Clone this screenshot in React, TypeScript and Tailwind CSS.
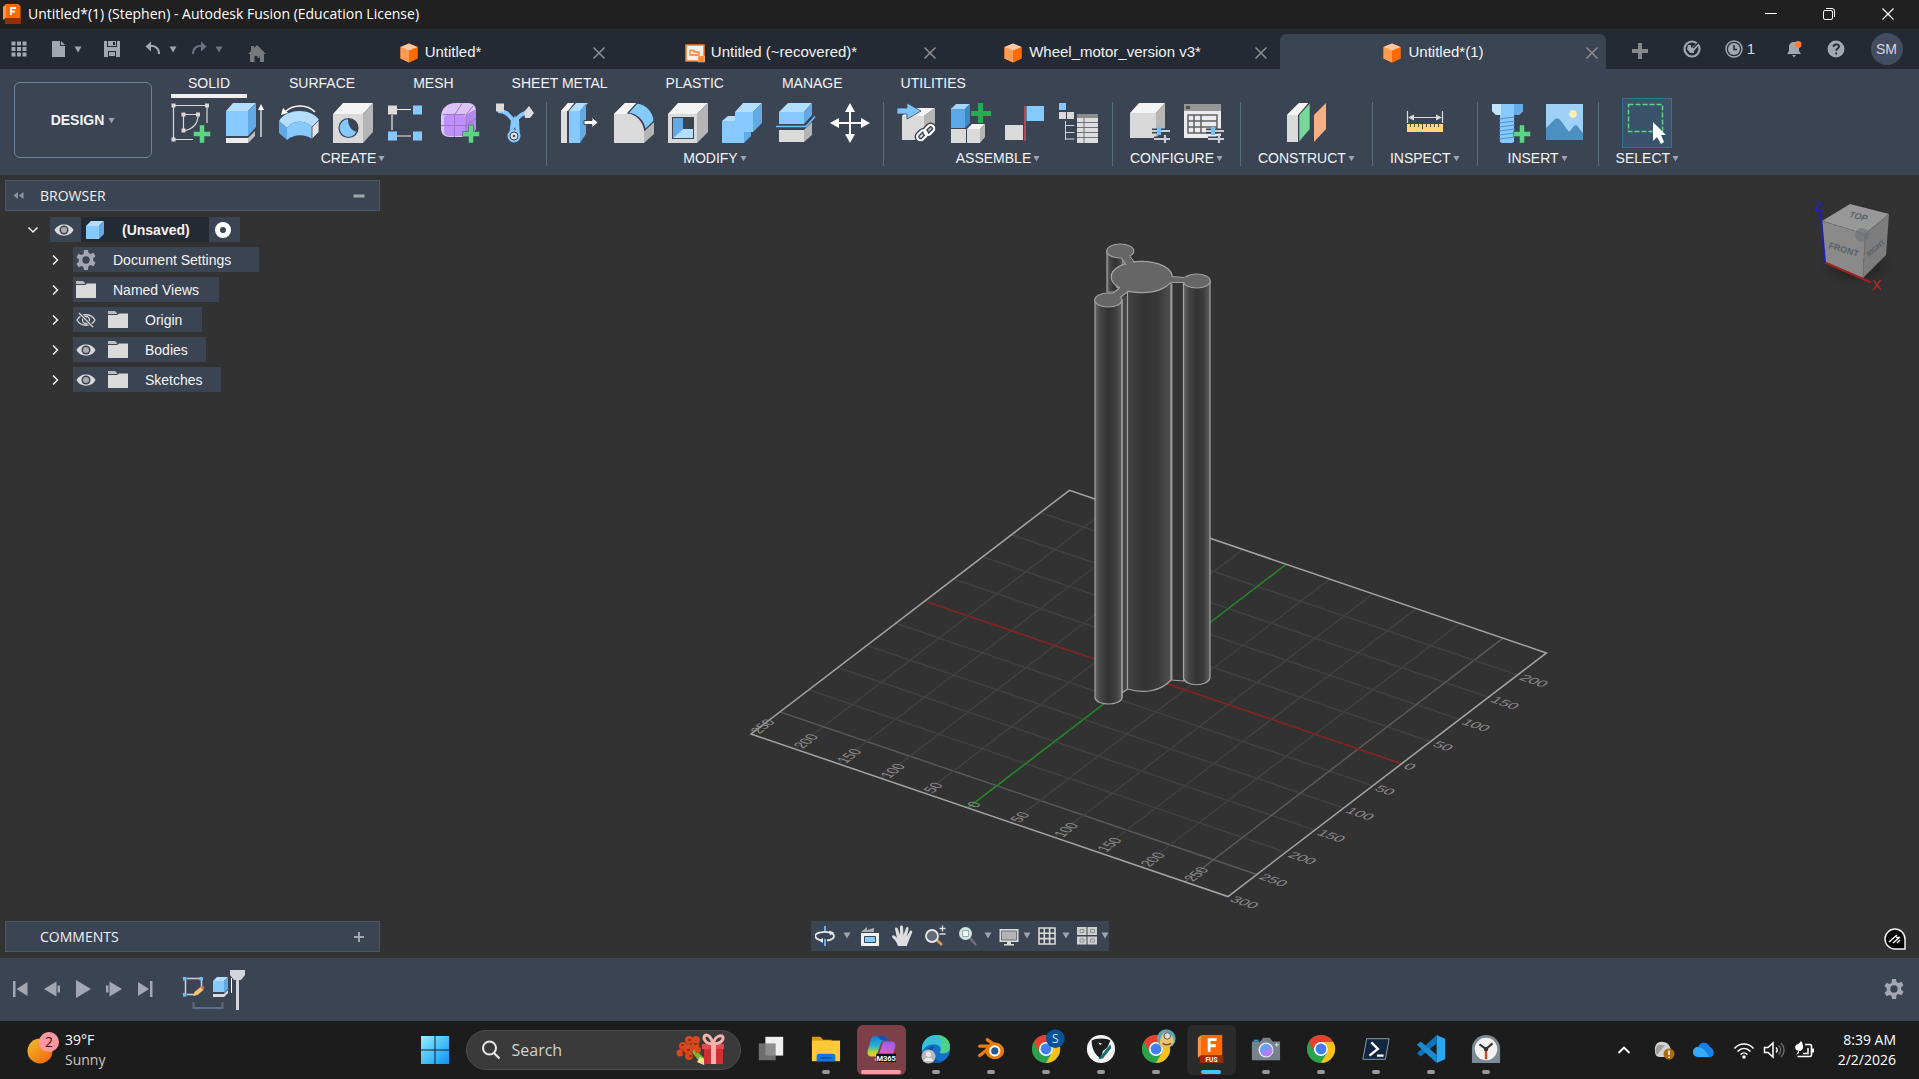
import { clsx } from 'clsx';
import type { PropsWithChildren, ReactNode } from 'react';

type IconProps = PropsWithChildren<{
  size?: number;
  box?: number;
  className?: string;
}>;

function Icon({ size = 40, box, className, children }: IconProps) {
  const b = box ?? size;
  return (
    <svg width={size} height={size} viewBox={`0 0 ${b} ${b}`} className={clsx('shrink-0', className)} fill="none" aria-hidden="true">
      {children}
    </svg>
  );
}

function Caret({ width = 8, className }: { width?: number; className?: string }) {
  return (
    <svg width={width} height="7" viewBox="0 0 8 7" className={clsx('shrink-0', className ?? 'text-[#9ea3b0]')} aria-hidden="true">
      <path d="M0.5 0.5h7L4 6.5z" fill="currentColor" />
    </svg>
  );
}

function GreenPlus({ x, y, color = '#5bd783' }: { x: number; y: number; color?: string }) {
  return <path d={`M${x - 2.5} ${y - 9}h5v6.500h6v5h-6v6.500h-5v-6.500h-6v-5h6z`} fill={color} stroke="#3b4453" strokeWidth="0.5" />;
}

function OrangeCube() {
  return (
    <Icon size={20} box={20}>
      <path d="M10 0.500L18.500 4v11.500L10 19.500 1.500 15.500V4z" fill="#ff7a1a" />
      <path d="M1.500 4L10 7.500v12L1.500 15.500z" fill="#ff9a52" />
      <path d="M10 7.500L18.500 4v11.500L10 19.500z" fill="#ff6b00" />
      <path d="M10 0.500L18.500 4 10 7.500 1.500 4z" fill="#ffc9a3" />
    </Icon>
  );
}

function DrawingDoc() {
  return (
    <Icon size={20} box={20}>
      <path d="M1 2h18v16H1z" fill="#f5f1ee" stroke="#ff7a1a" strokeWidth="1.500" />
      <path d="M5 7.500h4v1.500h5V12H5z" stroke="#ff7a1a" strokeWidth="1.300" />
      <path d="M13 13h6.500v6H13z" fill="#ff8a33" stroke="#ffd2b0" strokeWidth="0.500" />
    </Icon>
  );
}

/* ---------- ribbon icons ---------- */

const createIcons: [string, ReactNode][] = [
  ['Create Sketch', (
    <>
      <path d="M2.500 4v34M4 2.500h32M2.500 36.500H22M36 4v16" stroke="#d9d9d9" strokeWidth="1.200" />
      <path d="M12.500 12v16M13 11.500h13M27 12c0 9-5 14-14 16" stroke="#d9d9d9" strokeWidth="1.200" />
      <path d="M0.500 0.500h4v4h-4zM34 0.500h4v4h-4zM0.500 34.500h4v4h-4zM10.500 9.500h4v4h-4zM25 9.500h4v4h-4zM10.500 25.500h4v4h-4z" fill="#d9d9d9" />
      <GreenPlus x={31} y={31} />
    </>
  )],
  ['Extrude', (
    <>
      <path d="M1 35l22 0 7-7v5l-7 7H1z" fill="#bdbdbd" />
      <path d="M1 35h22v5H1z" fill="#ececec" />
      <path d="M1 8h22v25H1z" fill="#86c9ff" />
      <path d="M1 8l7-8h23l-8 8z" fill="#b3deff" />
      <path d="M23 8l8-8v24l-8 9z" fill="#61aae6" />
      <path d="M36 34V5" stroke="#fff" strokeWidth="1.200" />
      <path d="M36 1l3 6h-6z" fill="#fff" />
    </>
  )],
  ['Revolve', (
    <>
      <path d="M6 9C14 1 28 1 36 9" stroke="#fff" strokeWidth="1.300" />
      <path d="M2 12l2-7 5 5z" fill="#fff" />
      <path d="M0 18C8 5 32 5 40 17l-7 7C27 17 14 17 8 25z" fill="#b3deff" />
      <path d="M0 18l8 7v12L0 30z" fill="#61aae6" />
      <path d="M8 25c6-8 19-8 25-1v12c-7-5-18-5-25 1z" fill="#86c9ff" />
      <path d="M33 24l7-7v12l-7 7z" fill="#e3e3e3" stroke="#3b4453" strokeWidth="0.800" />
    </>
  )],
  ['Hole', (
    <>
      <path d="M0 11h30v29H0z" fill="#d9d9d9" />
      <path d="M0 11L10 0h30L30 11z" fill="#f4f4f4" />
      <path d="M30 11L40 0v29L30 40z" fill="#b5b5b5" />
      <circle cx="15.500" cy="25" r="9.500" fill="#86c9ff" stroke="#3b4453" strokeWidth="1.200" />
      <path d="M15 16a9.500 9.500 0 0 1 9.500 13C19 28 15 24 15 16z" fill="#3b4453" />
    </>
  )],
  ['Pattern', (
    <>
      <path d="M10 6.500h14M5 12v15M10 33h14" stroke="#f0f0f0" strokeWidth="1.200" />
      <path d="M1 2.500h9v9H1z" fill="#dcdcdc" />
      <path d="M26 2.500h9v9h-9zM1 28.500h9v9H1zM26 28.500h9v9h-9z" fill="#86c9ff" />
    </>
  )],
  ['Create Form', (
    <>
      <path d="M0 14C0 5 7 0 14 0h13c5 0 8 3 8 8v15c0 7-6 11-12 11H9c-6 0-9-3-9-9z" fill="#dcc4fa" />
      <path d="M25 12l10-6v17c0 7-6 11-12 11z" fill="#b487ea" />
      <path d="M3 15c0-2 1-3 3-3h15c2 0 3 1 3 3v14c0 3-1 4-4 4H8c-4 0-5-3-5-6z" fill="#bd90fa" />
      <path d="M13.500 34V12L21 0.500M0 22.500h25l10-7M25 33V12l7-9M2 11.500h22" stroke="#9a76cc" />
      <GreenPlus x={30} y={31} />
    </>
  )],
  ['Derive', (
    <>
      <path d="M3 8c8 0 11 4 15 9M35 9c-8 1-12 4-14 9M18 17l-2 17M22 17l1 17" stroke="#86c9ff" strokeWidth="4" />
      <path d="M20 12l3 8-3 6-3-6z" fill="#86c9ff" />
      <circle cx="19" cy="33" r="6.500" fill="#86c9ff" />
      <circle cx="19" cy="33" r="4" fill="#e6e6e6" stroke="#3b4453" />
      <circle cx="19" cy="33" r="1.300" fill="#3b4453" />
      <path d="M1 0.500h8v8H1zM34 3l5 7-4 5h-5l-1-6z" fill="#dcdcdc" />
    </>
  )],
];

const modifyIcons: [string, ReactNode][] = [
  ['Press Pull', (
    <>
      <path d="M1 8l7-8h6L7 8v32H1z" fill="#dedede" />
      <path d="M1 8l7-8h6L8 8z" fill="#f6f6f6" />
      <path d="M9 8h11v32H9z" fill="#86c9ff" />
      <path d="M9 8l7-8h12l-8 8z" fill="#b3deff" />
      <path d="M20 8l6-8v31l-6 9z" fill="#61aae6" />
      <path d="M24 17.500h8v-3.500l6 5.500-6 5.500v-3.500h-8z" fill="#fff" stroke="#3b4453" />
    </>
  )],
  ['Fillet', (
    <>
      <path d="M0 11L11 0h12L14 10c9 2 15 9 16 17v13H0z" fill="#dadada" />
      <path d="M0 11L11 0h12L13 11z" fill="#f6f6f6" />
      <path d="M30 28l10-9v12L30 40z" fill="#b5b5b5" />
      <path d="M14 10L23 0c10 1 17 10 17 18l-9 9C30 18 23 11 14 10z" fill="#86c9ff" stroke="#3b4453" strokeWidth="1.200" />
    </>
  )],
  ['Shell', (
    <>
      <path d="M0 11h29v29H0z" fill="#d9d9d9" />
      <path d="M0 11L10 0h30L29 11z" fill="#f4f4f4" />
      <path d="M29 11L40 0v29L29 40z" fill="#b5b5b5" />
      <path d="M4 14h22v22H4z" fill="#3b4453" />
      <path d="M5 15h10v11l-10 9z" fill="#61aae6" />
      <path d="M15 15h10v10H15z" fill="#3b4453" />
      <path d="M15 26h10v9H5z" fill="#b3deff" />
    </>
  )],
  ['Combine', (
    <>
      <path d="M0 18h13V9h18v20h-9v11H0z" fill="#86c9ff" />
      <path d="M13 9l8-9h19l-9 9zM0 18l6-5h7v5z" fill="#b3deff" />
      <path d="M31 9l9-9v20l-9 9zM22 29h7v4l-7 7z" fill="#61aae6" />
    </>
  )],
  ['Offset Face', (
    <>
      <path d="M3 9L12 0h24l-8 9z" fill="#b3deff" />
      <path d="M3 9h25v12H3z" fill="#86c9ff" />
      <path d="M28 9l8-9v12l-8 9z" fill="#61aae6" />
      <path d="M0 23.500h30l9-10" stroke="#6fc0ff" strokeWidth="1.500" />
      <path d="M3 27h25v12H3z" fill="#dadada" />
      <path d="M28 27l8-8v13l-8 7z" fill="#b5b5b5" />
    </>
  )],
  ['Move', (
    <path d="M20 0l5 9h-4v10h10v-4l9 5-9 5v-4H21v10h4l-5 9-5-9h4V21H9v4l-9-5 9-5v4h10V9h-4z" fill="#fff" />
  )],
];

const assembleIcons: [string, ReactNode][] = [
  ['Insert Derive', (
    <>
      <path d="M5 13h22v24H5z" fill="#dadada" />
      <path d="M5 13l8-8h25L27 13z" fill="#f4f4f4" />
      <path d="M27 13L38 5v22l-11 10z" fill="#b5b5b5" />
      <path d="M0 5h10V0l14 8-14 8v-5H0z" fill="#7cc4ff" stroke="#3b4453" strokeWidth="0.800" />
      <g stroke="#3b4453" strokeWidth="5"><rect x="20" y="29" width="11" height="7" rx="3.500" transform="rotate(-45 25 33)" /><rect x="27" y="23" width="11" height="7" rx="3.500" transform="rotate(-45 33 27)" /></g>
      <g stroke="#fff" strokeWidth="2.200"><rect x="20" y="29" width="11" height="7" rx="3.500" transform="rotate(-45 25 33)" /><rect x="27" y="23" width="11" height="7" rx="3.500" transform="rotate(-45 33 27)" /></g>
    </>
  )],
  ['New Component', (
    <>
      <path d="M0 5h14v20H0z" fill="#5ba7e8" />
      <path d="M0 6l5-5h14l-5 5z" fill="#a4d6ff" />
      <path d="M14 6l5-5v19l-5 5z" fill="#3f86c6" />
      <path d="M0 26h15v14H0zM16 26h13v14H16z" fill="#dadada" />
      <path d="M16 26l5-5h13l-5 5z" fill="#f4f4f4" />
      <path d="M29 26l5-5v13l-5 6z" fill="#b5b5b5" />
      <path d="M27 0h5v8h8v5h-8v7h-5v-7h-7V8h7z" fill="#1fae50" />
    </>
  )],
  ['Joint', (
    <>
      <path d="M0 22h18v15H0z" fill="#dadada" />
      <path d="M20 3v35" stroke="#e0525a" strokeWidth="1.300" />
      <path d="M21.500 3H39v15H21.500z" fill="#86c9ff" />
    </>
  )],
  ['Structure Table', (
    <>
      <path d="M0 0h7v7H0z" fill="#86c9ff" />
      <path d="M0 9h7v7H0zM8 9h7v7H8z" fill="#dadada" />
      <path d="M6.500 18v19M6.500 22.500h9M6.500 29.500h9M6.500 36h9" stroke="#d0d0d0" />
      <path d="M18 11h21v29H18z" fill="#dedede" />
      <path d="M18 11h21v4H18z" fill="#8c8c8c" />
      <path d="M18 19.500h21M18 24.500h21M18 29.500h21M18 34.500h21M25 15v25" stroke="#6c7078" />
    </>
  )],
];

const sliders = (
  <>
    <path d="M22 28h18M24 36h16M35 33v6" stroke="#3b4453" strokeWidth="5" />
    <path d="M22 28h18M24 36h16M35 32v8" stroke="#c9ced4" strokeWidth="2.200" />
    <path d="M27 24h4v8h-4z" fill="#6fc0ff" />
  </>
);

const configureIcons: [string, ReactNode][] = [
  ['Configure Design', (
    <>
      <path d="M0 10h26v25H0z" fill="#d9d9d9" />
      <path d="M0 10L9 0h26l-9 10z" fill="#f4f4f4" />
      <path d="M26 10l9-10v25l-9 10z" fill="#b5b5b5" />
      {sliders}
    </>
  )],
  ['Configuration Table', (
    <>
      <path d="M0 1h37v34H0z" fill="#ececec" />
      <path d="M0 1h37v7H0z" fill="#969696" />
      <path d="M2 3h4v3H2z" fill="#4b4f57" />
      <path d="M4 12h29v18H4zM4 18h29M4 24h29M10 12v18M17 12v18" stroke="#5d6066" strokeWidth="1.500" />
      {sliders}
    </>
  )],
];

const constructIcons: [string, ReactNode][] = [
  ['Offset Plane', (
    <>
      <path d="M1 12L13 0h9L12 12v27H1z" fill="#dadada" />
      <path d="M1 12L13 0h9L12 12z" fill="#f6f6f6" />
      <path d="M13 12L24 0v26L13 39z" fill="#79d69b" stroke="#3b4453" strokeWidth="0.600" />
      <path d="M28 12L40 0v26L28 39z" fill="#f6b083" />
    </>
  )],
];

const inspectIcons: [string, ReactNode][] = [
  ['Measure', (
    <>
      <path d="M2.500 8v12M37.500 8v12M5 14.500h30" stroke="#d9d9d9" strokeWidth="1.200" />
      <path d="M3 14.500l6-3v6zM37 14.500l-6-3v6z" fill="#d9d9d9" />
      <path d="M2 21h36v8H2z" fill="#ffd77a" />
      <path d="M5.500 21v3M9.500 21v3M13.500 21v3M17.500 21v5M21.500 21v3M25.500 21v3M29.500 21v3M33.500 21v3" stroke="#5d5540" />
    </>
  )],
];

const insertIcons: [string, ReactNode][] = [
  ['Insert Fastener', (
    <>
      <path d="M1 1h31v7l-4 4H5L1 8z" fill="#86c9ff" />
      <path d="M1 1h9v11H5L1 8z" fill="#c0e3ff" />
      <path d="M23 1h9v7l-4 4h-5z" fill="#63ace8" />
      <path d="M9 12h14v27l-2 1H11l-2-1z" fill="#86c9ff" />
      <path d="M8 16l16-2M8 20l16-2M8 24l16-2M8 28l16-2M8 32l16-2M8 36l16-2" stroke="#4c94d2" strokeWidth="1.200" />
      <GreenPlus x={31} y={31} />
    </>
  )],
  ['Canvas', (
    <>
      <path d="M1 1h37v36H1z" fill="#9fd0f7" />
      <circle cx="28" cy="11" r="3.800" fill="#ffeeb0" />
      <path d="M1 25l9-9c2-1 4-1 6 2l8 11 5-6c2-1 3-1 4 1l5 6v7H1z" fill="#4c8fc0" />
    </>
  )],
];

const groups: { name: string; icons: [string, ReactNode][]; edge?: string }[] = [
  { name: 'CREATE', icons: createIcons, edge: 'pr-1' },
  { name: 'MODIFY', icons: modifyIcons },
  { name: 'ASSEMBLE', icons: assembleIcons },
  { name: 'CONFIGURE', icons: configureIcons },
  { name: 'CONSTRUCT', icons: constructIcons },
  { name: 'INSPECT', icons: inspectIcons },
  { name: 'INSERT', icons: insertIcons },
];

function TitleBar() {
  return (
    <header className="flex h-[29px] items-center bg-[#202020] pb-px pl-[3px] font-['Open_Sans','Noto_Sans',sans-serif] text-sm text-white">
      <Icon size={20} box={20}>
        <path d="M3 0h12l2.500 2v12H2z" fill="#ff6a00" />
        <path d="M3 0v14l-3 2V3z" fill="#ff9448" />
        <path d="M2 14h16v6H2z" fill="#8f3200" />
        <path d="M8 11V4h5M8 7.500h4" stroke="#fff" strokeWidth="1.800" />
      </Icon>
      <h1 className="ml-[5px] flex-1 truncate font-normal">Untitled*(1) (Stephen) - Autodesk Fusion (Education License)</h1>
      <button type="button" aria-label="Minimize" className="flex w-[58px] justify-center">
        <Icon size={12}><path d="M0 5.500h12" stroke="#fff" /></Icon>
      </button>
      <button type="button" aria-label="Restore" className="flex w-[58px] justify-center">
        <Icon size={12}>
          <rect x="0.500" y="2.500" width="9" height="9" rx="1.500" stroke="#fff" />
          <path d="M3 0.500h6a2.500 2.500 0 0 1 2.500 2.500v6" stroke="#fff" />
        </Icon>
      </button>
      <button type="button" aria-label="Close" className="mr-px flex w-[60px] justify-center">
        <Icon size={12}><path d="M0.500 0.500l11 11M11.500 0.500l-11 11" stroke="#fff" strokeWidth="1.200" /></Icon>
      </button>
    </header>
  );
}

const documents = [
  { name: 'Untitled*', icon: <OrangeCube /> },
  { name: 'Untitled (~recovered)*', icon: <DrawingDoc /> },
  { name: 'Wheel_motor_version v3*', icon: <OrangeCube /> },
  { name: 'Untitled*(1)', icon: <OrangeCube />, active: true },
];

function DocumentBar() {
  return (
    <div className="flex h-10 items-end bg-[#232a34] text-[#a3a7b1]">
      <div className="flex h-10 w-[287px] shrink-0 items-center">
        <button type="button" aria-label="Data panel" className="flex w-[37px] justify-center">
          <Icon size={16}>
            <path d="M0.500 0.500h4v4h-4zM6 0.500h4v4H6zM11.500 0.500h4v4h-4zM0.500 6h4v4h-4zM6 6h4v4H6zM11.500 6h4v4h-4zM0.500 11.500h4v4h-4zM6 11.500h4v4H6zM11.500 11.500h4v4h-4z" fill="currentColor" />
          </Icon>
        </button>
        <button type="button" aria-label="File" className="flex w-[57px] items-center justify-center gap-2">
          <Icon size={16}><path d="M2 0h8v5h5v11H2zM11 0l4 4h-4z" fill="currentColor" /></Icon>
          <Caret />
        </button>
        <button type="button" aria-label="Save" className="flex w-9 justify-center">
          <Icon size={16}>
            <path d="M0 0h3v6h10V0h3v16H0z" fill="currentColor" />
            <path d="M4 0h8v5H4z" fill="currentColor" />
            <path d="M9 1h2v3H9zM4 10h8v6H4z" fill="#232a34" />
            <path d="M5 11h6v4H5z" fill="currentColor" />
          </Icon>
        </button>
        <button type="button" aria-label="Undo" className="ml-2 flex w-[46px] items-center justify-center gap-2">
          <Icon size={16}>
            <path d="M3 5c7-1 11 2 11 8" stroke="currentColor" strokeWidth="2" />
            <path d="M0.500 5.500L6 0.500v10z" fill="currentColor" />
          </Icon>
          <Caret />
        </button>
        <button type="button" aria-label="Redo" className="flex w-[46px] items-center justify-center gap-2 text-[#6c727e]">
          <Icon size={16}>
            <path d="M13 5C6 4 2 7 2 13" stroke="currentColor" strokeWidth="2" />
            <path d="M15.500 5.500L10 0.500v10z" fill="currentColor" />
          </Icon>
          <Caret className="text-[#6c727e]" />
        </button>
        <button type="button" aria-label="Home" className="mt-2 flex w-[54px] justify-center text-[#77797c]">
          <Icon size={18}>
            <path d="M9 1l9 9h-2v8h-4v-6H6.500v6H2v-8H0l3-3V2h3v2z" fill="currentColor" />
            <path d="M9.500 12h2v2h-2z" fill="currentColor" />
          </Icon>
        </button>
      </div>
      <div className="flex min-w-0 flex-1 gap-[5px] text-[15px] text-[#f3f3f4]">
        {documents.map((doc) => (
          <div key={doc.name} className={clsx('flex h-[35px] min-w-0 flex-1 items-center rounded-t-md pt-0.5 pr-2', doc.active && 'bg-[#3b4453]')}>
            <button type="button" className="flex min-w-0 flex-1 items-center justify-center gap-1.5">
              {doc.icon}
              <span className="truncate">{doc.name}</span>
            </button>
            <button type="button" aria-label={`Close ${doc.name}`} className="text-[#8d8f93]">
              <Icon size={12}><path d="M0.500 0.500l11 11M11.500 0.500l-11 11" stroke="currentColor" strokeWidth="1.500" /></Icon>
            </button>
          </div>
        ))}
      </div>
      <div className="flex h-10 w-[313px] shrink-0 items-center text-sm">
        <button type="button" aria-label="New tab" className="mt-1 flex w-[68px] justify-center text-[#86888c]">
          <Icon size={16}><path d="M6 0h4v6h6v4h-6v6H6v-6H0V6h6z" fill="currentColor" /></Icon>
        </button>
        <button type="button" aria-label="Extensions" className="flex w-9 justify-center">
          <Icon size={18}>
            <circle cx="9" cy="9" r="7.500" stroke="currentColor" strokeWidth="2.200" />
            <path d="M5 5l3 0 0 3 6-5 2 2-5 6 0 2-4 0-3-4z" fill="currentColor" />
            <path d="M10 8l5-5" stroke="#232a34" strokeWidth="1.500" />
          </Icon>
        </button>
        <button type="button" aria-label="Job status" className="flex w-[60px] items-center justify-center gap-1 text-[15px] text-[#d6d8dc]">
          <Icon size={18}>
            <circle cx="9" cy="9" r="8" stroke="#a3a7b1" strokeWidth="1.500" />
            <circle cx="9" cy="9" r="6" fill="#a3a7b1" />
            <path d="M9 5v4.500h3" stroke="#232a34" strokeWidth="1.500" />
          </Icon>
          1
        </button>
        <button type="button" aria-label="Notifications" className="flex w-12 justify-center">
          <Icon size={18}>
            <path d="M2 14l2-3V7c0-3 2-5 5-5s5 2 5 5v4l2 3zM7 15h4l-2 2.500z" fill="currentColor" />
            <circle cx="13" cy="4.500" r="3.500" fill="#ff7f41" />
          </Icon>
        </button>
        <button type="button" aria-label="Help" className="flex w-9 justify-center">
          <Icon size={18}>
            <circle cx="9" cy="9" r="8.500" fill="currentColor" />
            <path d="M6.500 7c0-3.500 5.500-3.500 5.500-0.500 0 2-2.800 2-2.800 4.200M9.200 12.500v2" stroke="#232a34" strokeWidth="1.800" />
          </Icon>
        </button>
        <div className="flex flex-1 justify-center">
          <button type="button" className="size-8 rounded-full bg-[#444c62] text-[#d4d6dc]">SM</button>
        </div>
      </div>
    </div>
  );
}

const workspaceTabs = ['SOLID', 'SURFACE', 'MESH', 'SHEET METAL', 'PLASTIC', 'MANAGE', 'UTILITIES'];

function GroupLabel({ children }: PropsWithChildren) {
  return (
    <button type="button" className="flex h-5 items-center gap-0.5 px-[11px]">
      {children}
      <Caret width={7} />
    </button>
  );
}

function Ribbon() {
  return (
    <div className="flex h-[106px] bg-[#3b4453] text-sm text-[#f3f4f6]">
      <button type="button" className="mt-[13px] ml-[14px] flex h-[76px] w-[138px] shrink-0 items-center justify-center gap-1 rounded-md border border-[#6f8299] font-bold">
        DESIGN
        <Caret width={7} />
      </button>
      <div className="ml-1.5 min-w-0">
        <nav className="flex h-[29px]">
          {workspaceTabs.map((tab, i) => (
            <button
              key={tab}
              type="button"
              className={clsx('mx-[13px] border-b-4 pt-1 leading-[21px] whitespace-nowrap', i === 0 ? 'border-[#f0f0f0] px-[17px]' : 'border-transparent px-4')}>
              {tab}
            </button>
          ))}
        </nav>
        <div className="flex">
          {groups.map(({ name, icons, edge }) => (
            <section key={name} className="flex">
              <div className={clsx('flex flex-col items-center pl-1.5', edge ?? 'pr-1.5')}>
                <div className="flex h-[50px] items-center">
                  {icons.map(([label, art]) => (
                    <button key={label} type="button" aria-label={label} className="flex w-[54px] justify-center">
                      <Icon>{art}</Icon>
                    </button>
                  ))}
                </div>
                <GroupLabel>{name}</GroupLabel>
              </div>
              <div className="mt-1 h-16 w-px bg-[#5b6d80]" />
            </section>
          ))}
          <section className="flex flex-col items-center pl-1.5">
            <button type="button" aria-label="Select" className="flex size-[50px] items-center justify-center border border-[#2f7396] bg-[#3a526a]">
              <Icon size={48}>
                <path d="M5.500 5.500h34v27H5.500z" stroke="#5bd783" strokeWidth="1.500" strokeDasharray="5 2" />
                <path d="M30 23v19l4-4 4 7 3-2-3-7h5z" fill="#fff" />
              </Icon>
            </button>
            <GroupLabel>SELECT</GroupLabel>
          </section>
        </div>
      </div>
    </div>
  );
}

/* ---------- viewport drawing ---------- */

// Origin corner of the ground grid and its two cell vectors; one cell is 50 mm.
const LEFT = [751, 734];
const U = [43.36, 14.78];
const V = [28.95, -22.15];
const cells = Array.from({ length: 12 }, (_, i) => i);

function at(u: number, v: number) {
  return [LEFT[0] + u * U[0] + v * V[0], LEFT[1] + u * U[1] + v * V[1]];
}

function GridLine({ from, to, color, width = 1 }: { from: number[]; to: number[]; color: string; width?: number }) {
  return <line x1={from[0]} y1={from[1]} x2={to[0]} y2={to[1]} stroke={color} strokeWidth={width} />;
}

function GroundGrid() {
  return (
    <g>
      {cells.map((i) => (
        <g key={i}>
          <GridLine from={at(i, 0)} to={at(i, 11)} color={i === 10 ? '#5a5a5a' : '#414141'} width={1.5} />
          <GridLine from={at(0, i)} to={at(11, i)} color={i === 1 ? '#5a5a5a' : '#414141'} width={1.5} />
        </g>
      ))}
      <GridLine from={at(0, 6)} to={at(11, 6)} color="#8c1f1f" width={1.5} />
      <GridLine from={at(5, 0)} to={at(5, 11)} color="#1f8a22" width={1.5} />
      <polygon points={[at(0, 0), at(11, 0), at(11, 11), at(0, 11)].join(' ')} fill="none" stroke="#a3a3a3" strokeWidth="1.500" />
      <g fill="#8b8b8b" fontSize="17" fontFamily="'Liberation Sans', Arial, sans-serif">
        {cells.slice(0, 11).map((i) => {
          const [x, y] = at(i, 0);
          return (
            <text key={i} x="4" y="7" transform={`matrix(0.579 -0.443 0.867 0.296 ${x} ${y})`}>
              {Math.abs(i - 5) * 50}
            </text>
          );
        })}
        {cells.slice(0, 11).map((i) => {
          const [x, y] = at(11, i);
          return (
            <text key={i} x="5" y="6" transform={`matrix(0.867 0.296 -0.579 0.443 ${x} ${y})`}>
              {Math.abs(6 - i) * 50}
            </text>
          );
        })}
      </g>
    </g>
  );
}

function Extrusion() {
  return (
    <g stroke="#a2a2a2" strokeWidth="1.200" strokeLinejoin="round">
      <path d="M1107 251v41h16v-40z" fill="url(#tube)" />
      <path d="M1122 296h6v394l-6 4z" fill="#454545" stroke="none" />
      <path d="M1171 281h13v400l-13-1z" fill="#343434" />
      <path d="M1127.500 288v401c16 5 34 2 43.500-9V282z" fill="url(#core)" />
      <path d="M1095 300v398c2 8 25 8 27 0V300z" fill="url(#tube)" />
      <path d="M1122 693l5.500-4M1122 300v398M1171.800 284v396" />
      <path d="M1183.500 281v397c2 9 24 9 26.500 0V281z" fill="url(#tube)" />
      <g fill="#666666">
        <ellipse cx="1120.300" cy="251" rx="13.500" ry="7" />
        <ellipse cx="1108.300" cy="300" rx="13.500" ry="7" />
        <ellipse cx="1196.700" cy="281" rx="13.500" ry="7" />
        <ellipse cx="1141.700" cy="277" rx="30.500" ry="15.700" />
      </g>
      <g fill="#666666" stroke="none">
        <path d="M1121 257l5 10 9-1-7-12z" />
        <path d="M1112 294l9-7 9 2-10 8z" />
        <path d="M1168 276.500l18 1v5.500l-18-0.500z" />
      </g>
      <path d="M1121.500 258l4.500 7M1130 256.500l4.500 6M1113 293l6-4.500-3-2M1120.500 297l7-5M1171.500 276.500l13 1M1171.500 282.500h13" fill="none" />
    </g>
  );
}

function ViewCube() {
  return (
    <g>
      <ellipse cx="1856" cy="266" rx="46" ry="24" fill="url(#cubeShade)" />
      <path d="M1850 204l39 10-24 20-43-13z" fill="#989898" />
      <path d="M1822 221l43 13-2 44-38-16z" fill="#8a8a8a" />
      <path d="M1865 234l24-20-3 41-23 23z" fill="#7d7d7d" />
      <path d="M1822 221l43 13 24-20M1865 234l-2 44" stroke="#6e6e6e" strokeDasharray="4 2" fill="none" />
      <circle cx="1862" cy="235" r="7" fill="#6c7177" fillOpacity="0.600" />
      <path d="M1820.500 212l4.500 50" stroke="#2020b0" strokeWidth="2" />
      <path d="M1825 262.500l46 20" stroke="#a02020" strokeWidth="2" />
      <g fontFamily="'Liberation Sans', Arial, sans-serif" fill="#5a6068">
        <text fontSize="9" fontWeight="bold" transform="translate(1848 217) rotate(14) skewX(-14)">TOP</text>
        <text fontSize="9" fontWeight="bold" transform="translate(1828 248) rotate(17)">FRONT</text>
        <text fontSize="7" fontWeight="bold" transform="translate(1869 257) rotate(-40)">RIGHT</text>
      </g>
      <g fontFamily="'Liberation Sans', Arial, sans-serif" fontSize="14">
        <text x="1815" y="211" fill="#2222c0">Z</text>
        <text x="1872" y="290" fill="#c02424">X</text>
      </g>
    </g>
  );
}

function Scene() {
  return (
    <svg viewBox="0 175 1919 783" preserveAspectRatio="xMidYMid slice" className="absolute inset-0 h-full w-full" role="img" aria-label="Model viewport">
      <defs>
        <linearGradient id="tube">
          <stop offset="0" stopColor="#666" />
          <stop offset="0.200" stopColor="#444" />
          <stop offset="0.500" stopColor="#333" />
          <stop offset="0.750" stopColor="#3c3c3c" />
          <stop offset="1" stopColor="#5c5c5c" />
        </linearGradient>
        <linearGradient id="core">
          <stop offset="0" stopColor="#424242" />
          <stop offset="0.400" stopColor="#333" />
          <stop offset="0.700" stopColor="#3a3a3a" />
          <stop offset="1" stopColor="#505050" />
        </linearGradient>
        <radialGradient id="cubeShade">
          <stop offset="0.400" stopColor="#262626" />
          <stop offset="1" stopColor="#323232" stopOpacity="0" />
        </radialGradient>
      </defs>
      <GroundGrid />
      <Extrusion />
      <ViewCube />
    </svg>
  );
}

/* ---------- browser tree ---------- */

function Eye({ hidden }: { hidden?: boolean }) {
  if (hidden) {
    return (
      <Icon size={20}>
        <path d="M1 10c4-7 14-7 18 0-4 7-14 7-18 0z" stroke="#d6d6d6" strokeWidth="1.300" />
        <circle cx="10" cy="10" r="3.500" stroke="#d6d6d6" strokeWidth="1.300" />
        <path d="M4 4l13 13" stroke="#3b4453" strokeWidth="3" />
        <path d="M3 3l14 14" stroke="#d6d6d6" strokeWidth="1.300" />
      </Icon>
    );
  }
  return (
    <Icon size={20}>
      <path d="M0.500 10C4 2.500 16 2.500 19.500 10 16 17.500 4 17.500 0.500 10z" fill="#d9d9d9" />
      <circle cx="10" cy="10" r="4.500" fill="#3b4453" />
      <circle cx="10" cy="10" r="3" fill="#a9abad" />
    </Icon>
  );
}

function Folder() {
  return (
    <Icon size={20}>
      <path d="M0 1h7l2 2v1H0z" fill="#bdbdbd" />
      <path d="M0 5h9l2-1.500h9V18H0z" fill="#dadada" />
    </Icon>
  );
}

function Gear({ size = 20 }: { size?: number }) {
  return (
    <Icon size={size} box={20} className="text-[#a3a7b1]">
      <path
        d="M8 0h4l0.500 3 2 1 3-1.300 2 3.500-2.300 2v2.600l2.300 2-2 3.500-3-1.300-2 1L12 20H8l-0.500-3-2-1-3 1.300-2-3.500 2.300-2V9.200l-2.300-2 2-3.500 3 1.300 2-1zM10 6.300a3.700 3.700 0 1 0 0 7.400 3.700 3.700 0 0 0 0-7.400z"
        fill="currentColor"
        fillRule="evenodd"
      />
    </Icon>
  );
}

function Chevron({ open }: { open?: boolean }) {
  return (
    <Icon size={12}>
      <path d={open ? 'M1.500 3.500L6 8l4.500-4.500' : 'M4 1.500L8.500 6 4 10.500'} stroke="#f0f0f0" strokeWidth="1.500" />
    </Icon>
  );
}

const nodes = [
  { name: 'Document Settings', icons: [<Gear key="g" />], end: 'pr-7' },
  { name: 'Named Views', icons: [<Folder key="f" />], end: 'pr-5' },
  { name: 'Origin', icons: [<Eye key="e" hidden />, <Folder key="f" />], end: 'pr-5' },
  { name: 'Bodies', icons: [<Eye key="e" />, <Folder key="f" />], end: 'pr-[18px]' },
  { name: 'Sketches', icons: [<Eye key="e" />, <Folder key="f" />], end: 'pr-[18px]' },
];

function PanelHeader({ title, left, right }: { title: string; left?: ReactNode; right: ReactNode }) {
  return (
    <div className="flex h-[31px] w-[375px] items-center border border-[#4a566a] bg-[#3b4453] font-['Open_Sans','Noto_Sans',sans-serif] text-sm text-[#f0f1f3]">
      <span className="flex w-[34px] justify-start pl-[7px]">{left}</span>
      <h2 className="flex-1 font-normal">{title}</h2>
      <span className="flex pr-[14px]">{right}</span>
    </div>
  );
}

function BrowserPanel() {
  return (
    <aside className="w-[375px] text-sm text-[#f4f4f5]">
      <PanelHeader
        title="BROWSER"
        left={
          <button type="button" aria-label="Collapse browser">
            <Icon size={11}><path d="M5 2v7L0.500 5.500zM10.500 2v7L6 5.500z" fill="#8994a8" /></Icon>
          </button>
        }
        right={
          <button type="button" aria-label="Minimize browser">
            <Icon size={12}><path d="M0.500 4.500h11v3h-11z" fill="#a3a7b1" /></Icon>
          </button>
        }
      />
      <ul className="mt-1.5 flex flex-col gap-[5px]">
        <li className="flex h-[25px] items-center pl-[22px]">
          <button type="button" aria-label="Collapse (Unsaved)" className="mr-[11px] flex"><Chevron open /></button>
          <button type="button" aria-label="Toggle visibility" className="flex h-full w-[31px] items-center bg-[#3b4453] pl-[4px]"><Eye /></button>
          <span className="flex h-full w-32 items-center bg-[#232a34] pl-1 font-bold">
            <Icon size={20}>
              <path d="M1 6h13v13H1z" fill="#86c9ff" />
              <path d="M1 6l5-5h13l-5 5z" fill="#b3deff" />
              <path d="M14 6l5-5v13l-5 5z" fill="#61aae6" />
            </Icon>
            <span className="ml-[17px]">(Unsaved)</span>
          </span>
          <label className="flex h-full w-[31px] items-center bg-[#3b4453] pl-1.5">
            <input type="radio" name="active-component" defaultChecked aria-label="Activate (Unsaved)" className="size-4 appearance-none rounded-full border-[5px] border-white bg-[#3b4453]" />
          </label>
        </li>
        {nodes.map(({ name, icons, end }) => (
          <li key={name} className="flex h-[25px] items-center pl-11">
            <button type="button" aria-label={`Expand ${name}`} className="mr-3 flex"><Chevron /></button>
            <span className={clsx('flex h-full items-center gap-3 bg-[#3b4453] pl-[3px]', end)}>
              {icons}
              <span className="ml-[5px]">{name}</span>
            </span>
          </li>
        ))}
      </ul>
    </aside>
  );
}

function NavigationBar() {
  return (
    <div className="flex h-[30px] w-[298px] items-center bg-[#3b4453] pb-px pl-1">
      <button type="button" aria-label="Orbit" className="flex w-9 items-center justify-between">
        <Icon size={20}>
          <path d="M10 0v6M10 13v7" stroke="#5fb0ee" strokeWidth="2" />
          <path d="M7 14.500C-1 13-2 8 5 6.500c6-1.500 14 0 14 3.500 0 2.500-3 4-7 4.500" stroke="#e8e8e8" strokeWidth="1.800" />
          <path d="M14 4.500l5 2-4 3zM8 12v5l-4-2.500z" fill="#e8e8e8" />
        </Icon>
        <Caret />
      </button>
      <button type="button" aria-label="Look At" className="ml-[3px] flex w-8 justify-center">
        <Icon size={20}>
          <path d="M1 6l6-5v3l7-2v4z" fill="#a9abad" />
          <path d="M1 7h18v13H1z" fill="#f0f0f0" />
          <path d="M4.500 10.500h11v6h-11z" fill="#86c9ff" stroke="#3b4453" />
        </Icon>
      </button>
      <button type="button" aria-label="Pan" className="flex w-8 justify-center">
        <Icon size={22}>
          <path d="M7 21C6 17 3 14 1 12c0-2 2-2 3-1l2 2L4 4c0-2 2-2 3 0l2 6L9 2c0-2 3-2 3 0l0.500 8L15 3c1-2 3-1 2.500 1L16 11l3-5c1-1 3 0 2 2l-3 7c-1 3-2 4-2 6z" fill="#dedede" />
        </Icon>
      </button>
      <button type="button" aria-label="Zoom" className="flex w-[34px] justify-center">
        <Icon size={22}>
          <path d="M13 15l5 5" stroke="#d99a52" strokeWidth="2.500" />
          <circle cx="8" cy="11" r="6" fill="#626a77" stroke="#e8e8e8" strokeWidth="1.800" />
          <path d="M15.500 3.500h6M18.500 0.500v6M15.500 9h6" stroke="#dedede" strokeWidth="1.300" />
        </Icon>
      </button>
      <button type="button" aria-label="Fit" className="flex w-10 items-center justify-between pl-1.5">
        <Icon size={20}>
          <path d="M11 11l7 8" stroke="#77706b" strokeWidth="2.500" />
          <circle cx="7.500" cy="7.500" r="6.500" fill="#d3e6e2" />
          <path d="M4.500 4.500h6v6h-6z" fill="#f4f4f4" stroke="#9aa" />
        </Icon>
        <Caret />
      </button>
      <button type="button" aria-label="Display Settings" className="ml-[7px] flex w-8 items-center justify-between">
        <Icon size={20}>
          <path d="M0.500 3h19v13h-19z" fill="#dadada" />
          <path d="M2.500 5h15v9h-15z" fill="#b3b3b3" stroke="#6c7078" />
          <path d="M8 16h4v2h3v1.500H5V18h3z" fill="#dadada" />
        </Icon>
        <Caret />
      </button>
      <button type="button" aria-label="Grid and Snaps" className="ml-[7px] flex w-8 items-center justify-between">
        <Icon size={18}>
          <path d="M1 1h16v16H1zM6.300 1v16M11.600 1v16M1 6.300h16M1 11.600h16" stroke="#dadada" strokeWidth="1.600" />
        </Icon>
        <Caret />
      </button>
      <button type="button" aria-label="Viewports" className="ml-[7px] flex w-8 items-center justify-between">
        <Icon size={20}>
          <path d="M0 1h9.500v8H0zM10.500 1H20v8h-9.500zM0 10.500h9.500v8H0zM10.500 10.500H20v8h-9.500z" fill="#cfcfcf" />
          <path d="M3 3.500h4v3H3zM13.500 3.500h4v3h-4zM3 13h4v3H3zM13.500 13h4v3h-4z" stroke="#8d9096" />
        </Icon>
        <Caret />
      </button>
    </div>
  );
}

function Viewport() {
  return (
    <main className="relative flex flex-1 flex-col justify-between overflow-hidden bg-[#323232] pt-[5px] pb-1.5 pl-[5px]">
      <Scene />
      <div className="relative">
        <BrowserPanel />
      </div>
      <div className="relative grid grid-cols-[1fr_auto_1fr] items-start pr-[5px]">
        <PanelHeader
          title="COMMENTS"
          right={
            <button type="button" aria-label="Add comment">
              <Icon size={12}><path d="M6 1v10M1 6h10" stroke="#a3a7b1" strokeWidth="2" /></Icon>
            </button>
          }
        />
        <NavigationBar />
        <button type="button" aria-label="Assistant" className="mt-[7px] mr-2 flex justify-self-end">
          <Icon size={22}>
            <path d="M11 1a10 10 0 0 1 10 10v10H11A10 10 0 0 1 11 1z" fill="#050505" stroke="#f2f2f2" strokeWidth="1.500" />
            <path d="M5 14l8-7M9 15l7-6M13 15l3-3M12 9.500h4" stroke="#f2f2f2" strokeWidth="1.500" />
          </Icon>
        </button>
      </div>
    </main>
  );
}

function Timeline() {
  return (
    <div className="flex h-[63px] items-center bg-[#3b4453] pb-0.5 pl-3 text-[#a3a7b1]">
      <button type="button" aria-label="To start" className="flex w-[31px]"><Icon size={18}><path d="M1 1h2.500v16H1zM15.500 2v14L4.500 9z" fill="currentColor" /></Icon></button>
      <button type="button" aria-label="Step back" className="flex w-[31px]"><Icon size={18}><path d="M1 9l12.500-7.500v15zM14.500 5.500H17v7h-2.500z" fill="currentColor" /></Icon></button>
      <button type="button" aria-label="Play" className="flex w-[31px]"><Icon size={18}><path d="M2 0l15 9-15 9z" fill="currentColor" /></Icon></button>
      <button type="button" aria-label="Step forward" className="flex w-[31px]"><Icon size={18}><path d="M17 9L4.500 1.500v15zM1 5.500h2.500v7H1z" fill="currentColor" /></Icon></button>
      <button type="button" aria-label="To end" className="flex w-[31px]"><Icon size={18}><path d="M14 1h2.500v16H14zM2 2v14l11-7z" fill="currentColor" /></Icon></button>
      <svg width="70" height="42" viewBox="0 0 70 42" className="ml-[14px]" role="img" aria-label="Sketch and extrude features" fill="none">
        <path d="M4.500 12v14M6 10.500h14M20.500 12v9M6 26.500h8" stroke="#cfcfcf" strokeWidth="1.500" />
        <path d="M2 9h3.500v3.500H2zM18.500 9H22v3.500h-3.500zM2 25h3.500v3.500H2z" fill="#6fc0ff" />
        <path d="M12 28l1.500-4 6-5 3 3-6 5z" fill="#f3c56d" />
        <path d="M19.500 19l2-1c1.500 0 2.500 2 1 4z" fill="#e85a5a" />
        <path d="M32 13h11v11H32z" fill="#86c9ff" />
        <path d="M32 13l4-4h11l-4 4z" fill="#b3deff" />
        <path d="M43 13l4-4v12l-4 4z" fill="#61aae6" />
        <path d="M32 26h11l4-4v3l-4 4H32z" fill="#dcdcdc" />
        <path d="M50.500 25V10" stroke="#fff" />
        <path d="M49 2h15v5l-4 5h-2v30h-3V12h-2l-4-5z" fill="#d3d5da" />
        <path d="M12.500 34v6h29v-6" stroke="#5e6d82" strokeWidth="2" />
      </svg>
      <button type="button" aria-label="Timeline settings" className="mr-[15px] ml-auto flex"><Gear /></button>
    </div>
  );
}

/* ---------- taskbar ---------- */

function Chrome() {
  return (
    <>
      <circle cx="16" cy="16" r="15" fill="#2ba24c" />
      <path d="M3 8.500A15 15 0 0 1 29 8.500H16A7.500 7.500 0 0 0 9.500 19.700z" fill="#e8402f" />
      <path d="M29 8.500A15 15 0 0 1 16 31l6.500-11.200A7.500 7.500 0 0 0 16 8.500z" fill="#fbc116" />
      <circle cx="16" cy="16" r="7.500" fill="#fff" />
      <circle cx="16" cy="16" r="5.800" fill="#3f7ff0" />
    </>
  );
}

const apps: { name: string; art: ReactNode; state?: 'running' | 'active' | 'alert' }[] = [
  { name: 'Task View', art: (
    <>
      <path d="M10 3h19v20H10z" fill="#f0f0f0" />
      <path d="M3 10h18v18H3z" fill="#7c7c7c" fillOpacity="0.850" />
    </>
  ) },
  { name: 'File Explorer', state: 'running', art: (
    <>
      <path d="M1 3h9l3 3h9v6H1z" fill="#d9950f" />
      <path d="M1 7h30v22H1z" fill="#ffc938" />
      <path d="M6 29v-5a3 3 0 0 1 3-3h14a3 3 0 0 1 3 3v5z" fill="#0f7ad0" />
      <path d="M10 25.500h12" stroke="#064f91" strokeWidth="1.500" />
    </>
  ) },
  { name: 'Microsoft 365 Copilot', state: 'alert', art: (
    <>
      <defs>
        <linearGradient id="m365a" x1="0" y1="0" x2="0" y2="1">
          <stop stopColor="#1577d8" />
          <stop offset="0.500" stopColor="#28b8cf" />
          <stop offset="0.800" stopColor="#b8d433" />
          <stop offset="1" stopColor="#f5c518" />
        </linearGradient>
        <linearGradient id="m365b" x1="0.500" y1="0" x2="0.300" y2="1">
          <stop stopColor="#9a5cf0" />
          <stop offset="0.600" stopColor="#e55cc0" />
          <stop offset="1" stopColor="#ff8a5c" />
        </linearGradient>
      </defs>
      <path d="M10 2h9c3 0 4 2 5 5h-4c-3 0-4 2-5 5l-4 12H6c-4 0-5-3-4-7l3-10c1-3 2-5 5-5z" fill="url(#m365a)" />
      <path d="M12 2h7c3 0 4 2 5 5h-5c-3 0-4-2-7-5z" fill="#1450b8" />
      <path d="M20 8h7c4 0 5 3 4 6l-3 10c-1 4-3 6-6 6h-9c-3 0-4-2-4-4 3 0 4-2 5-5l3-9c1-3 1-4 3-4z" fill="url(#m365b)" />
      <path d="M11 21h21v9H11z" fill="#111" />
      <text x="21.500" y="29" fontSize="8" fontWeight="bold" textAnchor="middle" fill="#fff" fontFamily="Roboto, sans-serif">M365</text>
    </>
  ) },
  { name: 'Edge', state: 'running', art: (
    <>
      <circle cx="16" cy="16" r="15" fill="#1571c8" />
      <path d="M1 16C1 7 8 1 16 1c9 0 15 6 15 13 0 5-5 8-11 6 3-5-1-9-6-9-6 0-11 3-13 9z" fill="#35c1d8" />
      <path d="M17 1c9 0 14 6 14 13 0 5-5 8-11 6 4-6 3-14-3-19z" fill="#4cd08a" />
      <path d="M14 13c-5 6-2 14 8 17-5 1-12 1-16-4-2-8 2-13 8-13z" fill="#0c4f9c" />
      <circle cx="8" cy="24" r="7.500" fill="#b9b9b9" />
      <circle cx="8" cy="21.500" r="2.800" fill="#ececec" />
      <path d="M3 29c0-5 10-5 10 0z" fill="#ececec" />
    </>
  ) },
  { name: 'Blender', state: 'running', art: (
    <>
      <path d="M4 13h13M4 23L19 11 12 6" stroke="#ea7d10" strokeWidth="3.500" strokeLinecap="round" />
      <ellipse cx="20" cy="18" rx="10" ry="9" fill="#ea7d10" />
      <circle cx="20" cy="18" r="6" fill="#fff" />
      <circle cx="20" cy="18" r="3.800" fill="#265787" />
    </>
  ) },
  { name: 'Chrome (S)', state: 'running', art: (
    <>
      <Chrome />
      <circle cx="26" cy="5" r="10" fill="#08529a" />
      <text x="26" y="10" fontSize="13" textAnchor="middle" fill="#cfe4ff" fontFamily="'Open Sans', sans-serif">S</text>
    </>
  ) },
  { name: 'Inkscape', state: 'running', art: (
    <>
      <circle cx="16" cy="16" r="15" fill="#f5f5f5" />
      <path d="M6 7c4-3 17-3 20 0l-3 7-5 4-2 8c-5-2-10-9-10-19z" fill="#1e1e1e" />
      <path d="M13 9l4 1-2 2z" fill="#f5f5f5" />
      <path d="M26 11L13 27l5-1 9-11z" fill="#14716b" />
    </>
  ) },
  { name: 'Chrome (profile)', state: 'running', art: (
    <>
      <Chrome />
      <circle cx="27" cy="5" r="10" fill="#58a6b8" />
      <path d="M20 12c0-9 3-14 7-14s8 5 8 11c-3 6-11 8-15 3z" fill="#e9c46a" />
      <circle cx="28" cy="2" r="3.500" fill="#ddd" stroke="#555" />
      <path d="M23 10c3 2 6 2 9 0" stroke="#7a4a2a" strokeWidth="1.500" />
    </>
  ) },
  { name: 'Autodesk Fusion', state: 'active', art: (
    <>
      <path d="M6 1h22v22H6z" fill="#ff6a00" />
      <path d="M6 1v22l-4 2V4z" fill="#ff9448" />
      <path d="M4 23h25v8H4z" fill="#8f3200" />
      <path d="M14 19V6h8M14 12.500h7" stroke="#fff" strokeWidth="3" />
      <text x="16.500" y="29.500" fontSize="7" fontWeight="bold" textAnchor="middle" fill="#fff" fontFamily="Roboto, sans-serif">FUS</text>
    </>
  ) },
  { name: 'Camera', state: 'running', art: (
    <>
      <path d="M1 8h9l3-4h7l3 4h8v20H1z" fill="#76828c" />
      <path d="M3 6h5v2H3z" fill="#2f9be0" />
      <circle cx="16" cy="17" r="8" fill="#eceff1" />
      <circle cx="16" cy="17" r="6.500" fill="#6e9bf5" />
      <path d="M11 21a6.500 6.500 0 0 0 11-7z" fill="#b77cf0" />
      <path d="M27.500 9.500v4M25.500 11.500h4" stroke="#dfe4e8" />
    </>
  ) },
  { name: 'Chrome', state: 'running', art: <Chrome /> },
  { name: 'PowerShell', state: 'running', art: (
    <>
      <path d="M6 5h24l-4 22H2z" fill="#12263f" stroke="#8fa0b3" />
      <path d="M11 9l7 7-9 7M17 23h7" stroke="#fff" strokeWidth="2.500" />
    </>
  ) },
  { name: 'Visual Studio Code', state: 'running', art: (
    <>
      <path d="M22 1l9 4v22l-9 4z" fill="#2aa7f2" />
      <path d="M22 1v9L5 24l-4-3.500z" fill="#0b74bd" />
      <path d="M22 31v-9L5 8l-4 3.500z" fill="#1a8ad4" />
    </>
  ) },
  { name: 'Clock', state: 'running', art: (
    <>
      <path d="M1 16A15 15 0 0 1 31 16v15H1z" fill="#7b8a94" />
      <circle cx="16" cy="16" r="12" fill="#f2f2f2" />
      <path d="M16 16L9 11M16 16l7-6" stroke="#333" strokeWidth="2.200" />
      <path d="M16 15v12" stroke="#d8431f" strokeWidth="2.500" />
      <circle cx="16" cy="16" r="2.500" fill="#333" />
    </>
  ) },
];

function Taskbar() {
  return (
    <footer className="grid h-[58px] grid-cols-[1fr_auto_1fr] items-center bg-[#1c1c1c] font-['Open_Sans','Noto_Sans',sans-serif] text-sm text-white">
      <button type="button" className="flex items-center pl-[25px] text-left leading-5">
        <Icon size={36}>
          <defs>
            <linearGradient id="sun" x1="0" y1="0" x2="1" y2="1">
              <stop stopColor="#f0c02c" />
              <stop offset="1" stopColor="#f0600c" />
            </linearGradient>
          </defs>
          <circle cx="15" cy="19" r="12.500" fill="url(#sun)" />
          <circle cx="24" cy="10" r="10" fill="#ff97a1" />
          <text x="24" y="15" fontSize="14" textAnchor="middle" fill="#2b1214">2</text>
        </Icon>
        <span className="ml-1">
          <span className="block">39°F</span>
          <span className="block text-[#c9c9c9]">Sunny</span>
        </span>
      </button>
      <div className="flex items-center pl-0.5">
        <button type="button" aria-label="Start" className="flex w-[55px] justify-center">
          <Icon size={30}>
            <defs>
              <linearGradient id="win" x1="0" y1="0" x2="1" y2="1">
                <stop stopColor="#8ff0ff" />
                <stop offset="1" stopColor="#0a92f5" />
              </linearGradient>
            </defs>
            <path d="M1 1h13.500v13.500H1zM15.500 1H29v13.500H15.500zM1 15.500h13.500V29H1zM15.500 15.500H29V29H15.500z" fill="url(#win)" />
          </Icon>
        </button>
        <label className="mx-[3px] flex h-10 w-[275px] items-center rounded-full border border-[#4d4d4d] bg-[#3a3a3a] px-[14px]">
          <Icon size={20}>
            <circle cx="8.500" cy="8" r="6.500" stroke="#e8e8e8" strokeWidth="2" />
            <path d="M13 13l5.500 5.500" stroke="#e8e8e8" strokeWidth="2.200" />
          </Icon>
          <input type="text" aria-label="Search" placeholder="Search" className="ml-[11px] w-0 flex-1 bg-transparent text-base placeholder:text-[#d2d2d2] focus:outline-none" />
          <svg width="50" height="36" viewBox="0 0 50 36" fill="none" aria-hidden="true">
            <path d="M18 16l12 12-5 4-9-12z" fill="#7db13a" />
            <path d="M24 25l6 3-2 5-7-3z" fill="#f2e08c" />
            <g fill="#d8481c">
              <circle cx="7" cy="14" r="4" /><circle cx="13" cy="8" r="4" /><circle cx="20" cy="8" r="4" /><circle cx="12" cy="17" r="5" />
              <circle cx="19" cy="14" r="4" /><circle cx="4" cy="21" r="3.500" /><circle cx="13" cy="24" r="4" /><circle cx="22" cy="18" r="3" />
            </g>
            <path d="M5 13h3M12 8h3M18 12h3M11 18h3M6 21h3M13 24h3" stroke="#8b260c" strokeWidth="1.500" />
            <path d="M28 15h19v17H28z" fill="#cf2f35" />
            <path d="M26 12h22v5H26z" fill="#e2484c" />
            <path d="M35 12h5v20h-5z" fill="#f6b3ad" />
            <path d="M37 12C28 12 26 4 30 3c4 0 6 5 7 9 1-4 4-9 9-8 3 2 0 8-9 8z" stroke="#f6b3ad" strokeWidth="3" />
          </svg>
        </label>
        {apps.map(({ name, art, state }) => (
          <button key={name} type="button" aria-label={name} className="flex w-[55px] justify-center">
            <span
              className={clsx(
                'flex h-[50px] w-[49px] flex-col items-center rounded-md pt-[9px]',
                state === 'active' && 'bg-[#2b2b2b]',
                state === 'alert' && 'bg-[#7c4048]',
              )}>
              <Icon size={30} box={32} className="overflow-visible">{art}</Icon>
              {state && (
                <span
                  className={clsx(
                    'mt-[6px] h-1 rounded-full',
                    state === 'running' && 'w-2 bg-[#9a9a9a]',
                    state === 'active' && 'w-5 bg-[#4cc2ff]',
                    state === 'alert' && 'w-10 bg-[#ff99a4]',
                  )}
                />
              )}
            </span>
          </button>
        ))}
      </div>
      <div className="flex items-center justify-end pr-[23px]">
        <button type="button" aria-label="Show hidden icons" className="flex w-10 justify-center">
          <Icon size={14}><path d="M1.500 10L7 4.500l5.500 5.500" stroke="#fff" strokeWidth="1.800" /></Icon>
        </button>
        <button type="button" aria-label="Sync warning" className="flex w-10 justify-center">
          <Icon size={22}>
            <path d="M2 12c-1-7 4-10 8-9 5 0 7 4 8 8l-4 7H7c-4 0-5-3-5-6z" fill="#d2d2d2" />
            <path d="M4 16L12 6l-7 0c-3 3-3 7-1 10z" fill="#9f9f9f" />
            <circle cx="16" cy="15" r="5.500" fill="#b06a10" />
            <path d="M16 11.500v4.500M16 17.500v1.500" stroke="#fff" strokeWidth="1.600" />
          </Icon>
        </button>
        <button type="button" aria-label="OneDrive" className="flex w-10 justify-center">
          <Icon size={22}>
            <path d="M5 18a5 5 0 0 1 0-10c2-5 9-6 12 0 5 2 5 10 0 10z" fill="#1480e8" />
            <path d="M5 18a5 5 0 0 1 0-10c3 0 8 3 11 10z" fill="#38a9f5" />
          </Icon>
        </button>
        <button type="button" aria-label="Network, volume and battery" className="flex items-center gap-2 pl-[9px]">
          <Icon size={22}>
            <path d="M1.500 9.500c5-6 14-6 19 0M4.500 12.500c4-4 9-4 13 0M7.500 15.500c2-2 5-2 7 0" stroke="#fff" strokeWidth="1.600" />
            <circle cx="11" cy="18" r="1.800" fill="#fff" />
          </Icon>
          <Icon size={22}>
            <path d="M1.500 8.500h3.500l5-4.500v14l-5-4.500H1.500z" stroke="#fff" strokeWidth="1.500" />
            <path d="M13 8.500c1.500 1.500 1.500 3.500 0 5" stroke="#fff" strokeWidth="1.400" />
            <path d="M15.500 6.500c3 3 3 6 0 9M18 4c4 4.500 4 9.500 0 14" stroke="#6a6a6a" strokeWidth="1.400" />
          </Icon>
          <Icon size={22}>
            <path d="M12 5.500h5a1.500 1.500 0 0 1 1.500 1.500v9a1.500 1.500 0 0 1-1.500 1.500H4.500" stroke="#fff" strokeWidth="1.600" />
            <path d="M19 9.500h2v4h-2z" fill="#fff" />
            <path d="M8 2c3 4 3 9-1 10-4 0-6-3-4-6 2-1 4-2 5-4zM3 16l3-5v3z" fill="#fff" />
            <path d="M10 14.500h5V9" stroke="#fff" strokeWidth="1.500" />
          </Icon>
        </button>
        <button type="button" className="ml-[23px] text-right text-sm leading-5">
          <span className="block">8:39 AM</span>
          <span className="block">2/2/2026</span>
        </button>
      </div>
    </footer>
  );
}

export default function App() {
  return (
    <div className="flex min-h-screen flex-col overflow-hidden bg-[#323232] font-['Liberation_Sans',Arial,sans-serif]">
      <TitleBar />
      <DocumentBar />
      <Ribbon />
      <Viewport />
      <Timeline />
      <Taskbar />
    </div>
  );
}
